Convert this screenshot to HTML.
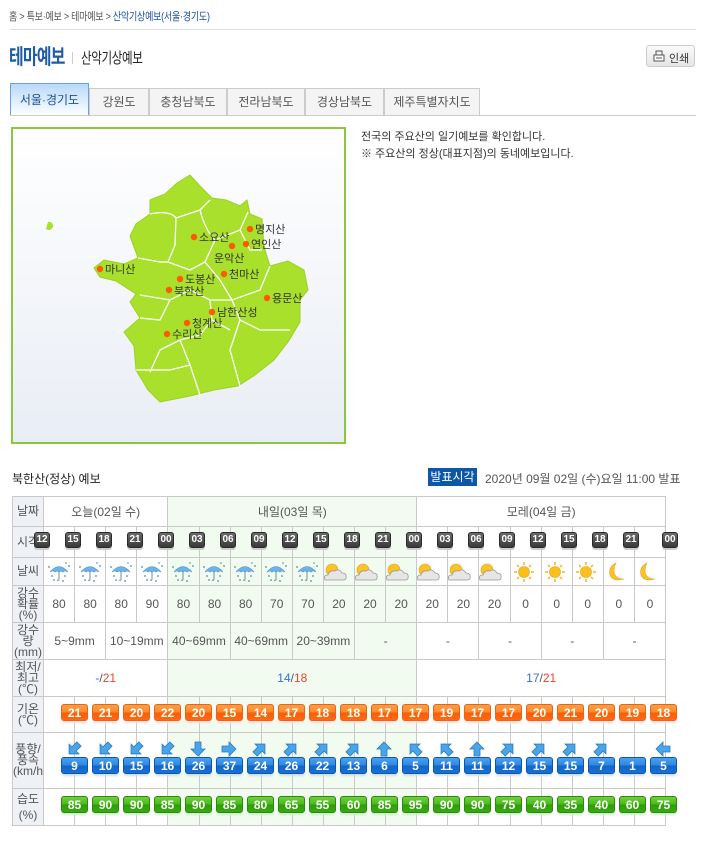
<!DOCTYPE html>
<html><head><meta charset="utf-8">
<style>
*{margin:0;padding:0;box-sizing:border-box}
body{width:702px;height:841px;background:#fff;font-family:"Liberation Sans","Noto Sans CJK KR",sans-serif;position:relative;overflow:hidden;color:#444}
.a{position:absolute}
.bc{left:9px;top:8px;font-size:11px;color:#555;letter-spacing:-0.3px;white-space:nowrap;transform:scaleX(0.82);transform-origin:left}
.bc b{font-weight:normal;color:#1a4f9c}
.hr{left:10px;top:29px;width:686px;height:1px;background:#ddd}
.title{left:9px;top:41px;font-size:21px;font-weight:bold;color:#1f5ca8;letter-spacing:-1px;white-space:nowrap;transform:scaleX(0.76);transform-origin:left}
.sub{left:81px;top:47px;font-size:15px;color:#222;letter-spacing:-0.5px;white-space:nowrap;transform:scaleX(0.77);transform-origin:left}
.bar{left:72px;top:52px;width:1px;height:12px;background:#ccc}
.print{left:646px;top:45px;width:49px;height:22px;border:1px solid #ccc;border-radius:3px;background:linear-gradient(#fafafa,#e6e6e6);font-size:11px;color:#333;padding:4px 0 0 22px}
.tab{top:88px;height:27px;border:1px solid #ccc;border-bottom:none;background:#f4f4f4;font-size:12px;color:#555;text-align:center;line-height:26px}
.tab.on{top:83px;height:33px;border:1px solid #6aa2e0;border-bottom:none;background:linear-gradient(#b8d9fb,#fff);color:#1e4f8e;line-height:32px}
.tabline{left:10px;top:115px;width:686px;height:1px;background:#ccc}
.map{left:11px;top:127px;width:335px;height:317px;border:2px solid #8cc63f;background:linear-gradient(#fff,#e9edf5)}
.intro{left:361px;top:129px;font-size:11px;color:#333;line-height:17px}
.fh{left:12px;top:470px;font-size:12px;color:#222}
.pub{left:428px;top:468px;width:49px;height:18px;background:#0b57a8;color:#fff;font-size:12px;text-align:center;line-height:18px}
.pubt{left:485px;top:470px;font-size:12px;color:#555}
table{position:absolute;left:12px;top:496px;border-collapse:collapse;table-layout:fixed;width:653px}
td{border:1px solid #c9c9c9;font-size:12px;color:#555;text-align:center;padding:0;overflow:hidden;white-space:nowrap}
td.h{background:#eef1f6;font-size:12px;line-height:11px;color:#555;white-space:normal}
td.g{background:#f1fbef}
.tb{position:absolute;top:532px;width:16px;height:16px;background:linear-gradient(#6a6a6a,#3a3a3a);border:1px solid #2a2a2a;border-radius:3px;color:#fff;font-size:10px;font-weight:bold;line-height:14px;text-align:center;box-shadow:0 2px 0 #ccc}
.bd{position:absolute;width:27px;height:17px;border-radius:3px;color:#fff;font-size:12px;font-weight:bold;text-align:center;line-height:16px}
.o{top:704px;background:linear-gradient(#fb9e45 0,#fb8a2d 50%,#ff5a05 51%,#ff6a10);border:1px solid #e8641a;box-shadow:0 3px 2px -1px #fdd}
.bl{top:757px;background:linear-gradient(#4a9ff0 0,#2e86e0 50%,#0f67c8 51%,#1a70d0);border:1px solid #0b56b0;box-shadow:0 3px 2px -1px #cde}
.gr{top:796px;background:linear-gradient(#6fd03a 0,#4ab81e 50%,#2e9d08 51%,#3aa812);border:1px solid #2a8a0c;box-shadow:0 3px 2px -1px #cec}
.ar{position:absolute;top:741px;width:16px;height:16px}
.wi{position:absolute;top:561px;width:26px;height:22px}
</style></head><body>
<svg width="0" height="0" style="position:absolute">
<defs>
<symbol id="rain" viewBox="0 0 26 22">
<path d="M4 11 Q13 0 22 11 Q19 9 17 11 Q15 9 13 11 Q11 9 9 11 Q7 9 4 11Z" fill="#6fb3e6" stroke="#4a90c8" stroke-width="0.6"/>
<path d="M13 11 V18 Q13 20 11 19" stroke="#7a8a99" stroke-width="1" fill="none"/>
<circle cx="3" cy="6" r="1" fill="#7aa"/><circle cx="23" cy="5" r="1" fill="#7aa"/><circle cx="6" cy="15" r="1" fill="#7aa"/><circle cx="19" cy="15" r="1" fill="#7aa"/><circle cx="8" cy="19" r="1" fill="#7aa"/><circle cx="17" cy="20" r="1" fill="#7aa"/><circle cx="20" cy="2" r="0.9" fill="#7aa"/>
</symbol>
<symbol id="pc" viewBox="0 0 26 22">
<circle cx="10" cy="9" r="6" fill="#fcc22a" stroke="#e8a010" stroke-width="0.6"/>
<path d="M3 19 Q1 14 6 14 Q7 9 13 10 Q17 7 20 12 Q25 12 24 17 Q24 19 21 19Z" fill="#e6e6e6" stroke="#999" stroke-width="0.8"/>
</symbol>
<symbol id="sun" viewBox="0 0 26 22">
<g stroke="#f3b51a" stroke-width="1.4"><path d="M13 1V4M13 18V21M3 11H6M20 11H23M6 4L8 6M18 16L20 18M6 18L8 16M18 6L20 4"/></g>
<circle cx="13" cy="11" r="5.5" fill="#fcbf1e" stroke="#eaa010" stroke-width="0.6"/>
</symbol>
<symbol id="moon" viewBox="0 0 26 22">
<path d="M12 2 Q4 6 6 14 Q9 21 20 18 Q11 18 10 11 Q10 5 12 2Z" fill="#fcc22a" stroke="#e0a010" stroke-width="0.6"/>
</symbol>
<symbol id="arr" viewBox="0 0 16 16">
<path d="M8 1 L15 8 L11 8 L11 15 L5 15 L5 8 L1 8Z" fill="#4ba3e8" stroke="#2a7cc4" stroke-width="0.8"/>
</symbol>
</defs></svg>

<div class="a bc">홈 &gt; 특보·예보 &gt; 테마예보 &gt; <b>산악기상예보(서울·경기도)</b></div>
<div class="a hr"></div>
<div class="a title">테마예보</div>
<div class="a bar"></div>
<div class="a sub">산악기상예보</div>
<div class="a print"><svg class="a" style="left:6px;top:4px" width="12" height="12" viewBox="0 0 12 12"><rect x="3" y="1" width="6" height="5" fill="none" stroke="#555"/><rect x="1" y="5" width="10" height="6" fill="#fff" stroke="#555"/><line x1="3" y1="8" x2="9" y2="8" stroke="#555"/></svg>인쇄</div>

<div class="a tab on" style="left:10px;width:79px">서울·경기도</div>
<div class="a tab" style="left:89px;width:60px">강원도</div>
<div class="a tab" style="left:149px;width:78px">충청남북도</div>
<div class="a tab" style="left:227px;width:78px">전라남북도</div>
<div class="a tab" style="left:305px;width:79px">경상남북도</div>
<div class="a tab" style="left:384px;width:96px">제주특별자치도</div>
<div class="a tabline"></div>

<div class="a map"></div>
<svg class="a" style="left:0;top:0" width="350" height="450">
<path d="M48 222 Q53 221 53 227 Q50 232 46 229Z" fill="#a8e02c"/>
<path d="M177 183 L190 175 L200 186 L212 198 L226 200 L240 206 L247 200 L250 214 L262 219 L264 247 L270 266 L288 261 L304 270 L308 290 L300 300 L300 322 L288 342 L274 360 L255 375 L238 386 L214 390 L190 396 L160 402 L148 390 L136 370 L134 346 L124 332 L140 318 L130 302 L136 294 L116 281 L100 277 L94 268 L104 260 L124 264 L138 258 L130 236 L136 224 L150 214 L150 200 L165 194Z" fill="#a8e02c" stroke="#9bd220" stroke-width="1"/>
<g stroke="#fff" stroke-width="1.3" fill="none">
<path d="M150 214 Q170 210 176 218 L175 245 L168 262 M176 218 L200 210 L210 200 M200 210 Q205 230 215 240 L205 262 L220 280 L232 300 M215 240 L240 230 L248 212 M240 230 L250 250 L262 250 M168 262 L190 270 L205 262 M138 258 L160 262 L168 262 M140 295 L170 300 L190 290 L210 300 L232 300 L260 290 L270 266 M232 300 L240 320 L260 330 L290 330 M240 320 L230 350 L240 386 M210 300 L212 320 L200 335 L180 340 L160 350 M180 340 L190 365 L200 395 M160 350 L150 372 M212 320 L230 330 M136 370 L170 370 L190 365 M170 300 L160 320 L140 318"/>
</g>
<g fill="#ff5a00">
<circle cx="194" cy="237" r="3.2"/><circle cx="250" cy="229" r="3.2"/><circle cx="246" cy="244" r="3.2"/><circle cx="232" cy="246" r="3.2"/><circle cx="100" cy="269" r="3.2"/><circle cx="180" cy="279" r="3.2"/><circle cx="224" cy="274" r="3.2"/><circle cx="169" cy="290" r="3.2"/><circle cx="267" cy="298" r="3.2"/><circle cx="212" cy="312" r="3.2"/><circle cx="187" cy="323" r="3.2"/><circle cx="167" cy="334" r="3.2"/>
</g>
<g font-size="11" fill="#333" font-family="Liberation Sans,Noto Sans CJK KR,sans-serif">
<text x="199" y="241">소요산</text><text x="255" y="233">명지산</text><text x="251" y="248">연인산</text><text x="214" y="262">운악산</text><text x="105" y="273">마니산</text><text x="185" y="283">도봉산</text><text x="229" y="278">천마산</text><text x="174" y="295">북한산</text><text x="272" y="302">용문산</text><text x="217" y="316">남한산성</text><text x="192" y="327">청계산</text><text x="172" y="338">수리산</text>
</g>
</svg>

<div class="a intro">전국의 주요산의 일기예보를 확인합니다.<br>※ 주요산의 정상(대표지점)의 동네예보입니다.</div>

<div class="a fh">북한산(정상) 예보</div>
<div class="a pub">발표시각</div>
<div class="a pubt">2020년 09월 02일 (수)요일 11:00 발표</div>

<table>
<colgroup><col style="width:31px"><col span="20" style="width:31.1px"></colgroup>
<tr style="height:30px"><td class="h">날짜</td><td colspan="4">오늘(02일 수)</td><td colspan="8" class="g">내일(03일 목)</td><td colspan="8">모레(04일 금)</td></tr>
<tr style="height:31px"><td class="h">시각</td><td></td><td></td><td></td><td></td><td class="g"></td><td class="g"></td><td class="g"></td><td class="g"></td><td class="g"></td><td class="g"></td><td class="g"></td><td class="g"></td><td></td><td></td><td></td><td></td><td></td><td></td><td></td><td></td></tr>
<tr style="height:28px"><td class="h">날씨</td><td></td><td></td><td></td><td></td><td class="g"></td><td class="g"></td><td class="g"></td><td class="g"></td><td class="g"></td><td class="g"></td><td class="g"></td><td class="g"></td><td></td><td></td><td></td><td></td><td></td><td></td><td></td><td></td></tr>
<tr style="height:37px"><td class="h">강수<br>확률<br>(%)</td><td>80</td><td>80</td><td>80</td><td>90</td><td class="g">80</td><td class="g">80</td><td class="g">80</td><td class="g">70</td><td class="g">70</td><td class="g">20</td><td class="g">20</td><td class="g">20</td><td>20</td><td>20</td><td>20</td><td>0</td><td>0</td><td>0</td><td>0</td><td>0</td></tr>
<tr style="height:37px"><td class="h">강수<br>량<br>(mm)</td><td colspan="2">5~9mm</td><td colspan="2">10~19mm</td><td colspan="2" class="g">40~69mm</td><td colspan="2" class="g">40~69mm</td><td colspan="2" class="g">20~39mm</td><td colspan="2" class="g">-</td><td colspan="2">-</td><td colspan="2">-</td><td colspan="2">-</td><td colspan="2">-</td></tr>
<tr style="height:37px"><td class="h">최저/<br>최고<br>(℃)</td><td colspan="4"><span style="color:#3a6fd8">-</span>/<span style="color:#e8443a">21</span></td><td colspan="8" class="g"><span style="color:#3a6fd8">14</span>/<span style="color:#e8443a">18</span></td><td colspan="8"><span style="color:#3a6fd8">17</span>/<span style="color:#e8443a">21</span></td></tr>
<tr style="height:36px"><td class="h">기온<br>(℃)</td><td></td><td></td><td></td><td></td><td class="g"></td><td class="g"></td><td class="g"></td><td class="g"></td><td class="g"></td><td class="g"></td><td class="g"></td><td class="g"></td><td></td><td></td><td></td><td></td><td></td><td></td><td></td><td></td></tr>
<tr style="height:56px"><td class="h">풍향/<br>풍속<br>(km/h)</td><td></td><td></td><td></td><td></td><td class="g"></td><td class="g"></td><td class="g"></td><td class="g"></td><td class="g"></td><td class="g"></td><td class="g"></td><td class="g"></td><td></td><td></td><td></td><td></td><td></td><td></td><td></td><td></td></tr>
<tr style="height:37px"><td class="h" style="line-height:16px">습도<br>(%)</td><td></td><td></td><td></td><td></td><td class="g"></td><td class="g"></td><td class="g"></td><td class="g"></td><td class="g"></td><td class="g"></td><td class="g"></td><td class="g"></td><td></td><td></td><td></td><td></td><td></td><td></td><td></td><td></td></tr>
</table>

<div class="tb" style="left:34px">12</div><div class="tb" style="left:65px">15</div><div class="tb" style="left:96px">18</div><div class="tb" style="left:127px">21</div><div class="tb" style="left:158px">00</div><div class="tb" style="left:189px">03</div><div class="tb" style="left:220px">06</div><div class="tb" style="left:251px">09</div><div class="tb" style="left:282px">12</div><div class="tb" style="left:313px">15</div><div class="tb" style="left:344px">18</div><div class="tb" style="left:375px">21</div><div class="tb" style="left:406px">00</div><div class="tb" style="left:437px">03</div><div class="tb" style="left:468px">06</div><div class="tb" style="left:499px">09</div><div class="tb" style="left:530px">12</div><div class="tb" style="left:561px">15</div><div class="tb" style="left:592px">18</div><div class="tb" style="left:623px">21</div><div class="tb" style="left:662px">00</div>

<svg class="wi" style="left:46px"><use href="#rain"/></svg><svg class="wi" style="left:77px"><use href="#rain"/></svg><svg class="wi" style="left:108px"><use href="#rain"/></svg><svg class="wi" style="left:139px"><use href="#rain"/></svg><svg class="wi" style="left:170px"><use href="#rain"/></svg><svg class="wi" style="left:201px"><use href="#rain"/></svg><svg class="wi" style="left:232px"><use href="#rain"/></svg><svg class="wi" style="left:263px"><use href="#rain"/></svg><svg class="wi" style="left:294px"><use href="#rain"/></svg>
<svg class="wi" style="left:322px"><use href="#pc"/></svg><svg class="wi" style="left:353px"><use href="#pc"/></svg><svg class="wi" style="left:384px"><use href="#pc"/></svg><svg class="wi" style="left:415px"><use href="#pc"/></svg><svg class="wi" style="left:446px"><use href="#pc"/></svg><svg class="wi" style="left:477px"><use href="#pc"/></svg>
<svg class="wi" style="left:511px"><use href="#sun"/></svg><svg class="wi" style="left:542px"><use href="#sun"/></svg><svg class="wi" style="left:573px"><use href="#sun"/></svg><svg class="wi" style="left:604px"><use href="#moon"/></svg><svg class="wi" style="left:635px"><use href="#moon"/></svg>

<div class="bd o" style="left:61px">21</div><div class="bd o" style="left:92px">21</div><div class="bd o" style="left:123px">20</div><div class="bd o" style="left:154px">22</div><div class="bd o" style="left:185px">20</div><div class="bd o" style="left:216px">15</div><div class="bd o" style="left:247px">14</div><div class="bd o" style="left:278px">17</div><div class="bd o" style="left:309px">18</div><div class="bd o" style="left:340px">18</div><div class="bd o" style="left:371px">17</div><div class="bd o" style="left:402px">17</div><div class="bd o" style="left:433px">19</div><div class="bd o" style="left:464px">17</div><div class="bd o" style="left:495px">17</div><div class="bd o" style="left:526px">20</div><div class="bd o" style="left:557px">21</div><div class="bd o" style="left:588px">20</div><div class="bd o" style="left:619px">19</div><div class="bd o" style="left:650px">18</div>

<svg class="ar" style="left:66px;transform:rotate(225deg)"><use href="#arr"/></svg><svg class="ar" style="left:97px;transform:rotate(225deg)"><use href="#arr"/></svg><svg class="ar" style="left:128px;transform:rotate(225deg)"><use href="#arr"/></svg><svg class="ar" style="left:159px;transform:rotate(225deg)"><use href="#arr"/></svg><svg class="ar" style="left:190px;transform:rotate(180deg)"><use href="#arr"/></svg><svg class="ar" style="left:221px;transform:rotate(90deg)"><use href="#arr"/></svg><svg class="ar" style="left:252px;transform:rotate(45deg)"><use href="#arr"/></svg><svg class="ar" style="left:283px;transform:rotate(45deg)"><use href="#arr"/></svg><svg class="ar" style="left:314px;transform:rotate(45deg)"><use href="#arr"/></svg><svg class="ar" style="left:345px;transform:rotate(45deg)"><use href="#arr"/></svg><svg class="ar" style="left:376px"><use href="#arr"/></svg><svg class="ar" style="left:407px;transform:rotate(-45deg)"><use href="#arr"/></svg><svg class="ar" style="left:438px;transform:rotate(-45deg)"><use href="#arr"/></svg><svg class="ar" style="left:469px"><use href="#arr"/></svg><svg class="ar" style="left:500px;transform:rotate(45deg)"><use href="#arr"/></svg><svg class="ar" style="left:531px;transform:rotate(45deg)"><use href="#arr"/></svg><svg class="ar" style="left:562px;transform:rotate(45deg)"><use href="#arr"/></svg><svg class="ar" style="left:593px;transform:rotate(45deg)"><use href="#arr"/></svg><svg class="ar" style="left:655px;transform:rotate(-90deg)"><use href="#arr"/></svg>

<div class="bd bl" style="left:61px">9</div><div class="bd bl" style="left:92px">10</div><div class="bd bl" style="left:123px">15</div><div class="bd bl" style="left:154px">16</div><div class="bd bl" style="left:185px">26</div><div class="bd bl" style="left:216px">37</div><div class="bd bl" style="left:247px">24</div><div class="bd bl" style="left:278px">26</div><div class="bd bl" style="left:309px">22</div><div class="bd bl" style="left:340px">13</div><div class="bd bl" style="left:371px">6</div><div class="bd bl" style="left:402px">5</div><div class="bd bl" style="left:433px">11</div><div class="bd bl" style="left:464px">11</div><div class="bd bl" style="left:495px">12</div><div class="bd bl" style="left:526px">15</div><div class="bd bl" style="left:557px">15</div><div class="bd bl" style="left:588px">7</div><div class="bd bl" style="left:619px">1</div><div class="bd bl" style="left:650px">5</div>

<div class="bd gr" style="left:61px">85</div><div class="bd gr" style="left:92px">90</div><div class="bd gr" style="left:123px">90</div><div class="bd gr" style="left:154px">85</div><div class="bd gr" style="left:185px">90</div><div class="bd gr" style="left:216px">85</div><div class="bd gr" style="left:247px">80</div><div class="bd gr" style="left:278px">65</div><div class="bd gr" style="left:309px">55</div><div class="bd gr" style="left:340px">60</div><div class="bd gr" style="left:371px">85</div><div class="bd gr" style="left:402px">95</div><div class="bd gr" style="left:433px">90</div><div class="bd gr" style="left:464px">90</div><div class="bd gr" style="left:495px">75</div><div class="bd gr" style="left:526px">40</div><div class="bd gr" style="left:557px">35</div><div class="bd gr" style="left:588px">40</div><div class="bd gr" style="left:619px">60</div><div class="bd gr" style="left:650px">75</div>
</body></html>
